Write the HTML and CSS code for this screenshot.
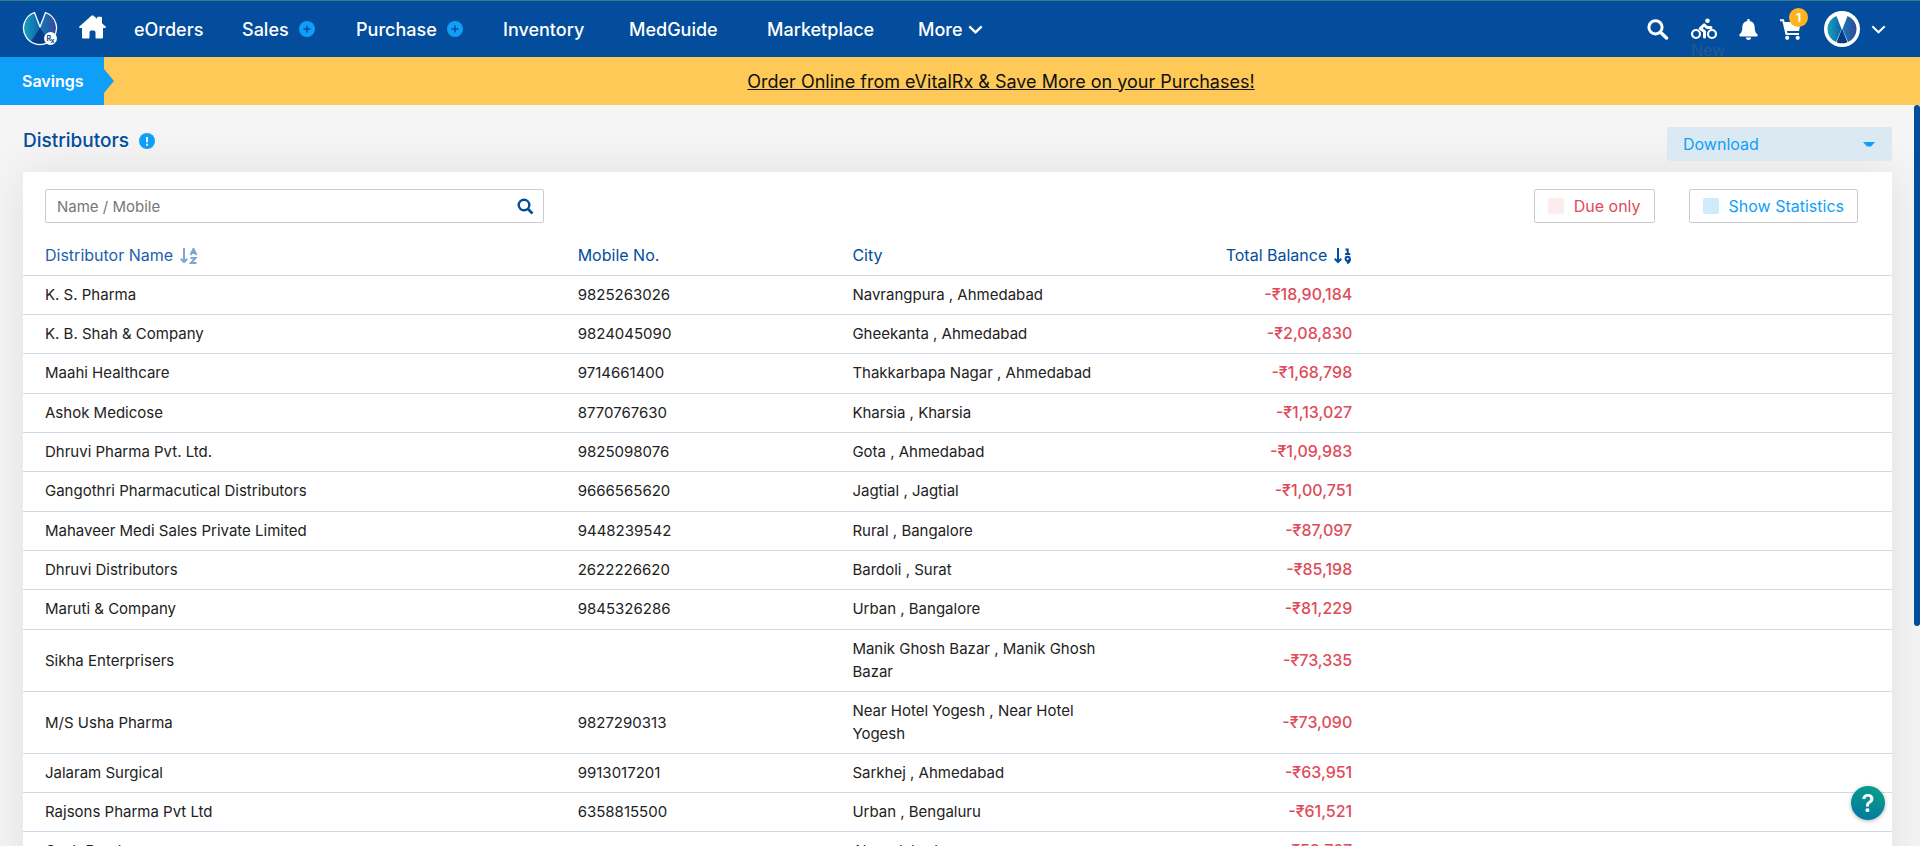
FILE: index.html
```html
<!DOCTYPE html>
<html lang="en">
<head>
<meta charset="utf-8">
<meta name="viewport" content="width=device-width, initial-scale=1">
<title>Distributors</title>
<link rel="stylesheet" href="styles.css">
</head>
<body>
<svg class="defs" width="0" height="0" aria-hidden="true">
  <defs>
    <linearGradient id="lg-left" x1="0" x2="1" y1="0" y2="0"><stop offset="0" stop-color="#16a3bd"/><stop offset="1" stop-color="#0f62a8"/></linearGradient>
    <linearGradient id="lg-right" x1="0" x2="1" y1="0" y2="0"><stop offset="0" stop-color="#1479b6"/><stop offset="1" stop-color="#35459a"/></linearGradient>
  </defs>
</svg>
<header class="topbar">
  <a class="brand" href="#" aria-label="eVitalRx">
    <svg width="36" height="36" viewBox="0 0 36 36">
      <path d="M12.5 1.5A17 17 0 0 0 8 31L18 17z" fill="url(#lg-left)"/>
      <path d="M23.5 1.5A17 17 0 0 1 28 31L18 17z" fill="url(#lg-right)"/>
      <path d="M18 17L10 32A17 17 0 0 0 27 31z" fill="#053b86"/>
      <path d="M12.5 1.5A16.500 16.500 0 1 0 23.500 1.500L18 16z" fill="none" stroke="#fff" stroke-width="1.300" stroke-linejoin="round"/>
      <circle cx="28.500" cy="27.500" r="6.500" fill="#fff"/>
      <text class="brand-rx" x="24.500" y="30">R</text><text class="brand-rx" x="28.500" y="32">x</text>
    </svg>
  </a>
  <a class="home" href="#" aria-label="Home">
    <svg width="27" height="24" viewBox="0 0 27 24"><path fill="#fff" d="M12.400.7a1.700 1.700 0 0 1 2.200 0L18 3.700V3c0-.8.500-1.300 1.300-1.300h2.400c.8 0 1.300.5 1.300 1.300v5.200l3.600 3.200c.6.5.2 1.600-.6 1.600h-2v9.300c0 .7-.6 1.300-1.300 1.300h-5.200c-.6 0-1-.4-1-1v-5c0-1.300-.8-2-2-2h-2c-1.200 0-2 .7-2 2v5c0 .6-.4 1-1 1H4.300C3.600 23.600 3 23 3 22.300V13H1c-.8 0-1.200-1.100-.6-1.600z"/></svg>
  </a>
  <nav class="menu">
    <a href="#">eOrders</a>
    <span class="menu-add"><a href="#">Sales</a><button class="plus" aria-label="Add sale"><svg width="8" height="8" viewBox="0 0 8 8"><path d="M4 .5v7M.5 4h7" stroke="#034d9c" stroke-width="1.500"/></svg></button></span>
    <span class="menu-add"><a href="#">Purchase</a><button class="plus" aria-label="Add purchase"><svg width="8" height="8" viewBox="0 0 8 8"><path d="M4 .5v7M.5 4h7" stroke="#034d9c" stroke-width="1.500"/></svg></button></span>
    <a href="#">Inventory</a>
    <a href="#">MedGuide</a>
    <a href="#">Marketplace</a>
    <button class="more">More <svg width="15" height="9" viewBox="0 0 15 9"><path d="M1.300 1.300l6.200 6 6.200-6" fill="none" stroke="#fff" stroke-width="2.400"/></svg></button>
  </nav>
  <div class="tools">
    <button aria-label="Search"><svg width="22" height="21" viewBox="0 0 22 21"><circle cx="8.500" cy="8.300" r="6.600" fill="none" stroke="#fff" stroke-width="3"/><path d="M13.500 13.200l6 5.800" stroke="#fff" stroke-width="3.400" stroke-linecap="round"/></svg></button>
    <button class="bike" aria-label="Deliveries"><svg width="26" height="22" viewBox="0 0 26 22" fill="none" stroke="#fff"><circle cx="5" cy="16" r="4" stroke-width="2.200"/><circle cx="21" cy="16" r="4" stroke-width="2.200"/><circle cx="16.500" cy="2.800" r="2.300" fill="#fff" stroke="none"/><path d="M20 9.500h-4l-2.800-2.700-4 3.700 4.300 3V19" stroke-width="3" stroke-linejoin="round" stroke-linecap="round"/></svg><span class="new">New</span></button>
    <button aria-label="Notifications"><svg width="19" height="21" viewBox="0 0 19 21" fill="#fff"><path d="M9.500 0c.8 0 1.300.5 1.300 1.300v.6c3 .6 4.900 3 4.900 6.100 0 4.600 1.300 6 2.600 7.300.8.900.3 2.200-.9 2.200H1.600c-1.200 0-1.700-1.300-.9-2.200C2 14 3.300 12.600 3.300 8c0-3.100 1.900-5.500 4.900-6.100v-.6C8.200.5 8.700 0 9.500 0zM6.800 18.600h5.400c0 1.400-1.200 2.400-2.700 2.400s-2.700-1-2.700-2.400z"/></svg></button>
    <button class="cart" aria-label="Cart"><svg width="22" height="21" viewBox="0 0 22 21" fill="#fff"><path d="M0 .2h3.900L4.600 3H21l-2 9H7l.4 2H19v2H5.600L2.400 2.200H0z"/><circle cx="7.200" cy="18.800" r="2.100"/><circle cx="17.700" cy="18.800" r="2.100"/></svg><span class="badge">1</span></button>
    <button class="account" aria-label="Account">
      <svg width="36" height="36" viewBox="0 0 36 36"><circle cx="18" cy="18" r="18" fill="#fff"/><path d="M12.500 5A14 14 0 0 0 12 31L17.500 18z" fill="url(#lg-left)"/><path d="M23.500 5A14 14 0 0 1 24 31L18.500 18z" fill="url(#lg-right)"/><path d="M18 17.500L12.500 31.200a14 14 0 0 0 11 0z" fill="#053b86"/></svg>
      <svg width="15" height="9" viewBox="0 0 15 9"><path d="M1.300 1.300l6.200 6 6.200-6" fill="none" stroke="#fff" stroke-width="2"/></svg>
    </button>
  </div>
</header>
<div class="promo">
  <span class="savings">Savings</span>
  <a class="promo-link" href="#">Order Online from eVitalRx &amp; Save More on your Purchases!</a>
</div>
<main class="page">
  <div class="page-head">
    <h1>Distributors</h1>
    <button class="info" aria-label="Help on distributors"><svg width="16" height="16" viewBox="0 0 16 16"><circle cx="8" cy="8" r="8" fill="#0f9ff8"/><path d="M8 4v5.200M8 10.800v1.900" stroke="#fff" stroke-width="1.800"/></svg></button>
    <button class="download">Download <svg width="12" height="5" viewBox="0 0 12 5"><path d="M0 0h12L8 4.500H4z" fill="#0f9ff8"/></svg></button>
  </div>
  <section class="card">
    <div class="filters">
      <div class="search">
        <input type="text" placeholder="Name / Mobile" aria-label="Name or mobile">
        <button aria-label="Search distributors"><svg width="17" height="17" viewBox="0 0 17 17"><circle cx="7" cy="7" r="5.300" fill="none" stroke="#034d9c" stroke-width="2.400"/><path d="M11 11l4.500 4.500" stroke="#034d9c" stroke-width="2.700"/></svg></button>
      </div>
      <label class="toggle due"><input type="checkbox">Due only</label>
      <label class="toggle stats"><input type="checkbox">Show Statistics</label>
    </div>
    <table>
      <colgroup><col class="c-name"><col class="c-mobile"><col class="c-city"><col class="c-balance"><col></colgroup>
      <thead><tr>
        <th><span class="sort idle">Distributor Name <svg width="18" height="16" viewBox="0 0 18 16" fill="none" stroke="#7fa5d2" stroke-width="2"><path d="M4 0v14M.8 10.800L4 14l3.200-3.200M10.500 7L13.500.8 16.500 7M11.500 5h4M10.500 10h5l-4.500 5h5.500"/></svg></span></th>
        <th>Mobile No.</th><th>City</th>
        <th class="num"><span class="sort">Total Balance <svg width="18" height="16" viewBox="0 0 18 16" fill="none" stroke="#034d9c" stroke-width="2"><path d="M4 0v14M.8 10.800L4 14l3.200-3.200M11.500 1.500h2.200V6M11.200 6h5"/><circle cx="13.700" cy="10.800" r="2.100"/><path d="M15.900 11c0 2.500-1 3.700-3 4"/></svg></span></th><th></th>
      </tr></thead>
      <tbody>
        <tr><td>K. S. Pharma</td><td>9825263026</td><td>Navrangpura , Ahmedabad</td><td class="num">-₹18,90,184</td><td></td></tr>
        <tr><td>K. B. Shah &amp; Company</td><td>9824045090</td><td>Gheekanta , Ahmedabad</td><td class="num">-₹2,08,830</td><td></td></tr>
        <tr><td>Maahi Healthcare</td><td>9714661400</td><td>Thakkarbapa Nagar , Ahmedabad</td><td class="num">-₹1,68,798</td><td></td></tr>
        <tr><td>Ashok Medicose</td><td>8770767630</td><td>Kharsia , Kharsia</td><td class="num">-₹1,13,027</td><td></td></tr>
        <tr><td>Dhruvi Pharma Pvt. Ltd.</td><td>9825098076</td><td>Gota , Ahmedabad</td><td class="num">-₹1,09,983</td><td></td></tr>
        <tr><td>Gangothri Pharmacutical Distributors</td><td>9666565620</td><td>Jagtial , Jagtial</td><td class="num">-₹1,00,751</td><td></td></tr>
        <tr><td>Mahaveer Medi Sales Private Limited</td><td>9448239542</td><td>Rural , Bangalore</td><td class="num">-₹87,097</td><td></td></tr>
        <tr><td>Dhruvi Distributors</td><td>2622226620</td><td>Bardoli , Surat</td><td class="num">-₹85,198</td><td></td></tr>
        <tr><td>Maruti &amp; Company</td><td>9845326286</td><td>Urban , Bangalore</td><td class="num">-₹81,229</td><td></td></tr>
        <tr><td>Sikha Enterprisers</td><td></td><td>Manik Ghosh Bazar , Manik Ghosh Bazar</td><td class="num">-₹73,335</td><td></td></tr>
        <tr><td>M/S Usha Pharma</td><td>9827290313</td><td>Near Hotel Yogesh , Near Hotel Yogesh</td><td class="num">-₹73,090</td><td></td></tr>
        <tr><td>Jalaram Surgical</td><td>9913017201</td><td>Sarkhej , Ahmedabad</td><td class="num">-₹63,951</td><td></td></tr>
        <tr><td>Rajsons Pharma Pvt Ltd</td><td>6358815500</td><td>Urban , Bengaluru</td><td class="num">-₹61,521</td><td></td></tr>
        <tr><td>Cash Purchase</td><td></td><td>Ahmedabad</td><td class="num">-₹58,767</td><td></td></tr>
      </tbody>
    </table>
  </section>
  <div class="scroll-thumb"></div>
</main>
<button class="help" aria-label="Help">?</button>
</body>
</html>
```
FILE: styles.css
```css
* { box-sizing: border-box; }
body {
  margin: 0;
  height: 100vh;
  display: flex;
  flex-direction: column;
  overflow: hidden;
  background: #fff;
  color: #222;
  font: 15px/23px Inter, "Noto Sans", sans-serif;
}
a { color: inherit; text-decoration: none; }
button { padding: 0; border: 0; background: none; color: inherit; font: inherit; cursor: pointer; }
svg { display: block; flex: none; }
.defs { position: absolute; }

.topbar {
  display: flex;
  align-items: center;
  flex: none;
  height: 57px;
  padding: 0 34px 0 22px;
  border-top: 1px solid #33808c;
  background: #034d9c;
  color: #fff;
}
.brand-rx { fill: #034d9c; font-size: 7px; font-weight: 700; }
.home { margin: 0 28px 4px 21px; }
.menu {
  display: grid;
  grid-template-columns: 108px 114px 147px 126px 138px 151px auto;
  align-items: center;
  font-size: 18px;
  font-weight: 500;
}
.menu-add, .more { display: flex; align-items: center; }
.menu-add { gap: 10px; }
.more { gap: 5px; }
.plus {
  display: grid;
  place-items: center;
  width: 16px;
  height: 16px;
  border-radius: 50%;
  background: #0f9ff8;
}
.tools { display: flex; align-items: center; gap: 22px; margin-left: auto; }
.bike, .cart { position: relative; }
.new { position: absolute; top: 21px; left: 0; font-size: 16px; color: #23588f; }
.badge {
  position: absolute;
  top: -11px;
  left: 9px;
  width: 19px;
  height: 19px;
  border-radius: 50%;
  background: #ffb31f;
  font-size: 12px;
  line-height: 19px;
  font-weight: 700;
}
.account { display: flex; align-items: center; gap: 11px; }

.promo { display: flex; align-items: center; flex: none; height: 48px; background: #fec957; }
.savings {
  position: relative;
  align-self: stretch;
  width: 104px;
  padding-left: 22px;
  background: #0f9ff8;
  color: #fff;
  font-size: 16px;
  line-height: 48px;
  font-weight: 600;
}
.savings::after {
  content: "";
  position: absolute;
  top: 12px;
  left: 100%;
  border: 12px solid transparent;
  border-left: 10px solid #0f9ff8;
  border-right: 0;
}
.promo-link { margin: 0 auto; padding-right: 22px; font-size: 18px; color: #111; text-decoration: underline; }

.page {
  position: relative;
  flex: 1;
  min-height: 0;
  margin-bottom: 7px;
  padding: 22px 28px 0 23px;
  overflow: hidden;
  background: #f5f5f5;
}
.page-head { display: flex; gap: 10px; padding-bottom: 11px; }
h1 { margin: 2px 0 0; font-size: 19px; line-height: 24px; font-weight: 500; color: #034d9c; }
.info { align-self: start; margin-top: 6px; }
.download {
  display: flex;
  align-items: center;
  justify-content: space-between;
  position: relative;
  z-index: 1;
  width: 225px;
  height: 34px;
  margin-left: auto;
  padding: 0 17px 0 16px;
  border-radius: 2px;
  background: #dbe9f3;
  color: #0f9ff8;
  font-size: 16px;
}
.card {
  min-height: 100%;
  border-radius: 2px;
  background: #fff;
  box-shadow: 0 0 50px rgba(0, 0, 0, .09);
}
.filters { display: flex; align-items: center; gap: 34px; padding: 17px 34px 13px 22px; }
.search {
  display: flex;
  align-items: center;
  width: 499px;
  height: 34px;
  margin-right: auto;
  padding: 0 9px 0 11px;
  border: 1px solid #ccc;
  border-radius: 2px;
}
.search input { flex: 1; border: 0; outline: 0; padding: 0; background: none; font: inherit; color: inherit; }
.search input::placeholder { color: #777; }
.toggle {
  display: flex;
  align-items: center;
  gap: 10px;
  height: 34px;
  padding: 0 13px;
  border: 1px solid #ccc;
  border-radius: 2px;
  font-size: 16px;
}
.toggle input { appearance: none; width: 16px; height: 16px; margin: 0; border-radius: 2px; }
.due { color: #e04b5a; }
.due input { background: #fdeced; }
.stats { color: #0f9ff8; }
.stats input { background: #cfebfe; }

table { width: 100%; table-layout: fixed; border-collapse: separate; border-spacing: 0; }
.c-name { width: 28.5%; }
.c-mobile { width: 14.7%; }
.c-city { width: 16%; }
.c-balance { width: 13.1%; }
th, td { padding: 7px 22px 8px; border-bottom: 1px solid #ccdaea; text-align: left; }
th { padding-top: 8px; font-size: 16px; font-weight: 400; color: #034d9c; }
tbody tr:nth-child(3n):nth-child(-n+9) td { padding-bottom: 9px; }
.sort { display: inline-flex; align-items: center; gap: 7px; }
.idle { color: #1d5fab; }
.num { text-align: right; }
td.num { color: #e04b5a; font-size: 16px; font-weight: 500; }

.scroll-thumb { position: absolute; top: 0; right: 0; width: 6px; height: 521px; border-radius: 4px; background: #034d9c; }
.help {
  position: fixed;
  right: 35px;
  bottom: 33px;
  width: 34px;
  height: 34px;
  border-radius: 50%;
  background: linear-gradient(200deg, #06a385, #0574a3);
  box-shadow: 0 1px 4px rgba(0, 0, 0, .3);
  color: #fff;
  font-size: 24px;
  font-weight: 600;
}
```
